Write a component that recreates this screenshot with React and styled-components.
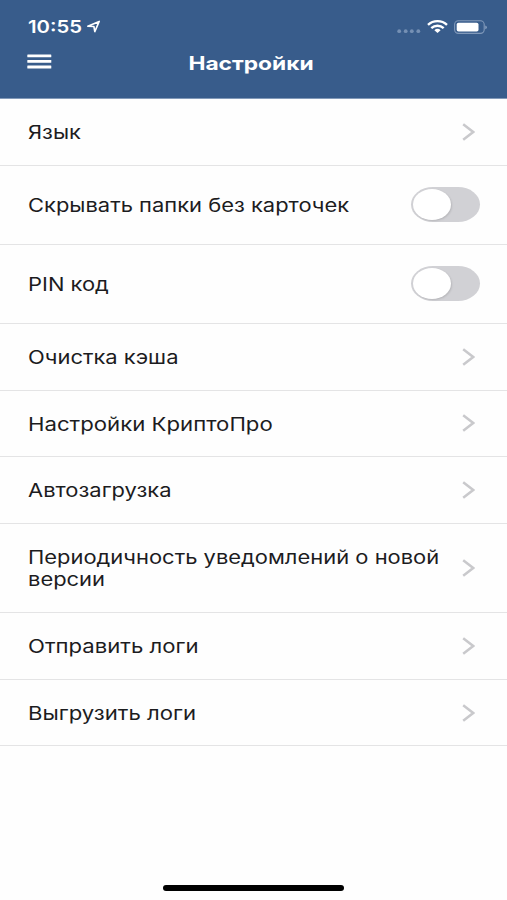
import React, { useState } from "react";
import styled, { createGlobalStyle } from "styled-components";

const GlobalStyle = createGlobalStyle`
  * {
    box-sizing: border-box;
  }
  body {
    margin: 0;
    background: #fefefe;
    font-family: Inter, "Liberation Sans", sans-serif;
    color: #1c1c1e;
  }
`;

const Screen = styled.div`
  display: flex;
  flex-direction: column;
  height: 900px;
  overflow: hidden;
`;

const Header = styled.header`
  height: 98.6px;
  flex-shrink: 0;
  background: #385c8b;
  border-bottom: 1px solid #8299b8;
  color: #fff;
`;

const StatusBar = styled.div`
  display: flex;
  justify-content: space-between;
  align-items: center;
  height: 42px;
  padding: 11px 20px 0 28px;
`;

const StatusGroup = styled.div`
  display: flex;
  align-items: center;
`;

const Time = styled.span`
  width: 58px;
  font-size: 17.5px;
  font-weight: 600;
  line-height: 22px;
  white-space: nowrap;
  transform: scaleX(1.16);
  transform-origin: left center;
`;

const NavBar = styled.div`
  display: grid;
  grid-template-columns: 60px 1fr 60px;
  align-items: center;
  height: 42px;
`;

const MenuButton = styled.button`
  display: flex;
  padding: 0 0 4px 27px;
  border: 0;
  background: none;
  cursor: pointer;
`;

const Title = styled.h1`
  margin: 0;
  padding-right: 4px;
  font-size: 18.5px;
  font-weight: 650;
  line-height: 24px;
  text-align: center;
  transform: scaleX(1.23);
`;

const List = styled.main`
  flex: 1;
`;

const Row = styled.div`
  display: flex;
  align-items: center;
  justify-content: space-between;
  height: ${({ $height }) => $height}px;
  padding: 0 27px 0 28px;
  border-bottom: 1px solid #e4e4e5;
  cursor: pointer;
`;

const Label = styled.span`
  padding-top: 0.9px;
  font-size: 18.5px;
  line-height: 22.3px;
  white-space: pre-line;
  transform: scaleX(${({ $stretch }) => $stretch || 1.185});
  transform-origin: left center;
`;

const Chevron = styled.svg`
  flex-shrink: 0;
  margin-right: 5px;
`;

const Track = styled.button`
  flex-shrink: 0;
  display: flex;
  justify-content: ${({ $on }) => ($on ? "flex-end" : "flex-start")};
  align-items: center;
  width: 69px;
  height: 35px;
  padding: 0 2px;
  border: 0;
  border-radius: 22px / 17.5px;
  background: ${({ $on }) => ($on ? "#4cd964" : "#d1d1d5")};
  cursor: pointer;
`;

const Knob = styled.span`
  width: 38px;
  height: 31px;
  border-radius: 50%;
  background: #fff;
  box-shadow: 1px 1px 2px rgba(0, 0, 0, 0.12);
`;

const HomeArea = styled.footer`
  display: flex;
  justify-content: center;
  height: 15px;
`;

const HomeIndicator = styled.div`
  width: 181px;
  height: 6px;
  border-radius: 3px;
  background: #000;
`;

const items = [
  { label: "Язык", height: 67 },
  { label: "Скрывать папки без карточек", height: 79, toggle: true },
  { label: "PIN код", height: 79, toggle: true },
  { label: "Очистка кэша", height: 67 },
  { label: "Настройки КриптоПро", height: 66.6, stretch: 1.198 },
  { label: "Автозагрузка", height: 66.8 },
  { label: "Периодичность уведомлений о новой\nверсии", height: 89 },
  { label: "Отправить логи", height: 66.8, stretch: 1.195 },
  { label: "Выгрузить логи", height: 66.6, stretch: 1.195 },
];

const Toggle = () => {
  const [on, setOn] = useState(false);

  return (
    <Track $on={on} onClick={() => setOn(!on)}>
      <Knob />
    </Track>
  );
};

const App = () => {
  return (
    <>
      <GlobalStyle />
      <Screen>
        <Header>
          <StatusBar>
            <StatusGroup>
              <Time>10:55</Time>
              <svg width="16" height="14" viewBox="0 0 16 14">
                <path
                  d="M1.8 6.3 13.2 1.4 8.8 11.6 7.9 6.5Z"
                  fill="none"
                  stroke="#fff"
                  strokeWidth="1.6"
                  strokeLinejoin="round"
                />
              </svg>
            </StatusGroup>
            <StatusGroup>
              <svg width="90" height="16" viewBox="0 0 90 16">
                <g fill="#7590b4">
                  <circle cx="2.2" cy="12.2" r="1.9" />
                  <circle cx="8.7" cy="12.2" r="1.9" />
                  <circle cx="14.8" cy="12.2" r="1.9" />
                  <circle cx="21.3" cy="12.2" r="1.9" />
                </g>
                <g fill="none" stroke="#fff" strokeWidth="2.4">
                  <path d="M31 5.8C36.2 .9 44.8 .9 50 5.8" />
                  <path d="M34.3 9.2C37.9 5.9 43.1 5.9 46.7 9.2" />
                </g>
                <path d="M37.4 11.2C39.2 9.4 41.8 9.4 43.6 11.2L40.5 14Z" fill="#fff" />
                <rect x="57.6" y="1.8" width="29.6" height="12.6" rx="3.8" fill="none" stroke="#8199ba" strokeWidth="1.1" />
                <rect x="59.7" y="3.8" width="21.8" height="8.7" rx="1.8" fill="#fff" />
                <path d="M88.2 6.4Q90 6.8 90 8.3T88.2 10.2Z" fill="#8199ba" />
              </svg>
            </StatusGroup>
          </StatusBar>
          <NavBar>
            <MenuButton aria-label="Меню">
              <svg width="25" height="15" viewBox="0 0 25 15" fill="#fff">
                <rect x="0.3" y="0.4" width="24" height="2.8" rx="0.5" />
                <rect x="0.3" y="6" width="24" height="2.8" rx="0.5" />
                <rect x="0.3" y="11.6" width="24" height="2.8" rx="0.5" />
              </svg>
            </MenuButton>
            <Title>Настройки</Title>
          </NavBar>
        </Header>
        <List>
          {items.map(({ label, height, toggle, stretch }) => (
            <Row key={label} $height={height}>
              <Label $stretch={stretch}>{label}</Label>
              {toggle ? (
                <Toggle />
              ) : (
                <Chevron width="13" height="18" viewBox="0 0 13 18">
                  <path d="M1.2 1.2 11.2 9 1.2 16.8" fill="none" stroke="#c9c9cc" strokeWidth="2.5" />
                </Chevron>
              )}
            </Row>
          ))}
        </List>
        <HomeArea>
          <HomeIndicator />
        </HomeArea>
      </Screen>
    </>
  );
};

export default App;
